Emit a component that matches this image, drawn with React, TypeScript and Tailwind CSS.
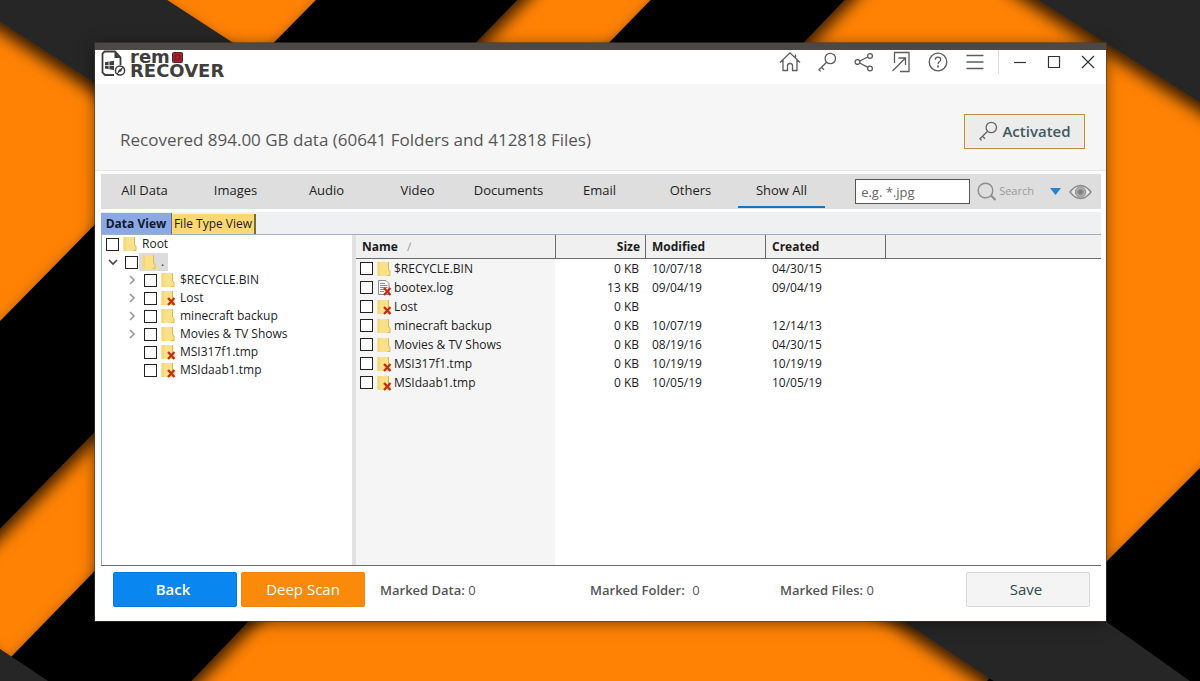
import { useState } from 'react';
import type { ReactNode } from 'react';

type FileKind = 'folder' | 'folder-deleted' | 'file-deleted';

const tabs = ['All Data', 'Images', 'Audio', 'Video', 'Documents', 'Email', 'Others', 'Show All'];

const tree: { name: string; kind: FileKind; expandable: boolean }[] = [
  { name: '$RECYCLE.BIN', kind: 'folder', expandable: true },
  { name: 'Lost', kind: 'folder-deleted', expandable: true },
  { name: 'minecraft backup', kind: 'folder', expandable: true },
  { name: 'Movies & TV Shows', kind: 'folder', expandable: true },
  { name: 'MSI317f1.tmp', kind: 'folder-deleted', expandable: false },
  { name: 'MSIdaab1.tmp', kind: 'folder-deleted', expandable: false },
];

const files: { name: string; kind: FileKind; size: string; modified: string; created: string }[] = [
  { name: '$RECYCLE.BIN', kind: 'folder', size: '0 KB', modified: '10/07/18', created: '04/30/15' },
  { name: 'bootex.log', kind: 'file-deleted', size: '13 KB', modified: '09/04/19', created: '09/04/19' },
  { name: 'Lost', kind: 'folder-deleted', size: '0 KB', modified: '', created: '' },
  { name: 'minecraft backup', kind: 'folder', size: '0 KB', modified: '10/07/19', created: '12/14/13' },
  { name: 'Movies & TV Shows', kind: 'folder', size: '0 KB', modified: '08/19/16', created: '04/30/15' },
  { name: 'MSI317f1.tmp', kind: 'folder-deleted', size: '0 KB', modified: '10/19/19', created: '10/19/19' },
  { name: 'MSIdaab1.tmp', kind: 'folder-deleted', size: '0 KB', modified: '10/05/19', created: '10/05/19' },
];

const Wallpaper = () => (
  <svg
    className="absolute inset-0 w-full h-full"
    viewBox="0 0 1200 681"
    preserveAspectRatio="xMidYMid slice"
    aria-hidden="true"
  >
    <defs>
      <filter id="band" x="-20%" y="-20%" width="140%" height="140%">
        <feDropShadow dx="0" dy="10" stdDeviation="8" floodColor="#000" floodOpacity="0.8" />
      </filter>
    </defs>
    <rect width="1200" height="681" fill="#ff8204" />
    <g fill="#000" filter="url(#band)">
      <path d="M-60 382 L375 -60 L576 -60 L-60 590 Z" />
      <path d="M-60 730 L709 -60 L902 -60 L130 745 Z" />
      <path d="M1106 562 L1260 408 L1260 625 L1010 860 L960 708 Z" />
    </g>
    <g fill="#282526" filter="url(#band)">
      <path d="M-60 -17 L-60 -60 L75 -60 L330 106 L330 235 Z" />
      <path d="M943 -60 L1260 -60 L1260 140 Z" />
      <path d="M800 553 L1010 553 L1270 738 L1080 738 Z" />
      <path d="M-60 609 L120 729 L-60 729 Z" />
    </g>
  </svg>
);

const Logo = () => (
  <div className="flex items-start gap-1 text-[#3f3d3e]">
    <svg width="25" height="27" viewBox="0 0 25 27" fill="none" aria-hidden="true">
      <path d="M13 25 H4 L1.5 22.5 V3.5 L3.5 1.5 H14 L19.5 7.5 V15" stroke="currentColor" strokeWidth="1.8" />
      <path d="M13.5 1.5 V8 H20 Z" fill="currentColor" />
      <path
        d="M4 12.2 L7.6 11.6 V15 H4 Z M8.4 11.4 L13 10.7 V15 H8.4 Z M4 15.8 H7.6 V19.2 L4 18.6 Z M8.4 15.8 H13 V20 L8.4 19.3 Z"
        fill="currentColor"
      />
      <circle cx="19" cy="20.5" r="4.6" fill="#fff" stroke="currentColor" strokeWidth="1.5" />
      <path d="M16.5 22.5 L18 19.5 L21.8 18 L20.2 21.5 Z" fill="currentColor" />
      <path d="M16 24 L22 17" stroke="currentColor" />
    </svg>
    <p className="font-['DejaVu_Sans',sans-serif] font-bold text-lg leading-[14px]">
      rem
      <svg className="inline-block align-baseline ml-[2px]" width="11" height="11" viewBox="0 0 11 11" aria-hidden="true">
        <rect x="0.5" y="0.5" width="10" height="10" rx="1" fill="#a3202c" stroke="#4a2c30" />
        <path d="M3 3h5v5H3z" fill="none" stroke="#7d1a24" />
      </svg>
      <br />
      RECOVER
    </p>
  </div>
);

const KeyIcon = () => (
  <svg width="20" height="20" viewBox="0 0 20 20" fill="none" stroke="currentColor" strokeWidth="1.3" aria-hidden="true">
    <circle cx="13.3" cy="6.5" r="5.2" />
    <path d="M9.6 10.2 L1.5 18.3 M4.5 15.3 L7 17.8 M2 17.8 L3.6 19.4" />
  </svg>
);

const actions: { label: string; icon: ReactNode }[] = [
  {
    label: 'Home',
    icon: (
      <svg width="22" height="22" viewBox="0 0 22 22" fill="none" stroke="currentColor" strokeWidth="1.3">
        <path d="M1 11.5 L11 1.8 L21 11.5 M4 9 V19.5 H8.5 V14.5 Q8.5 12.5 11 12.5 Q13.5 12.5 13.5 14.5 V19.5 H18 V9 M16.5 7 V3.5" />
      </svg>
    ),
  },
  { label: 'License', icon: <KeyIcon /> },
  {
    label: 'Share',
    icon: (
      <svg width="20" height="20" viewBox="0 0 20 20" fill="none" stroke="currentColor" strokeWidth="1.3">
        <circle cx="3.5" cy="10" r="2.4" />
        <circle cx="16" cy="4" r="2.4" />
        <circle cx="16" cy="16.5" r="2.4" />
        <path d="M5.7 9 L13.8 5 M5.7 11 L13.8 15.4" />
      </svg>
    ),
  },
  {
    label: 'Export',
    icon: (
      <svg width="20" height="22" viewBox="0 0 20 22" fill="none" stroke="currentColor" strokeWidth="1.3">
        <path d="M3.5 12 V1.5 H18 V20.5 H9 M1.5 20 L14 7.5 M7.5 7 H14.5 V14" />
      </svg>
    ),
  },
  {
    label: 'Help',
    icon: (
      <svg width="20" height="20" viewBox="0 0 20 20" fill="none" stroke="currentColor" strokeWidth="1.3">
        <circle cx="10" cy="10" r="8.8" />
        <path d="M7.3 7.8 Q7.3 5.2 10 5.2 Q12.7 5.2 12.7 7.6 Q12.7 9 11.2 9.8 Q10 10.5 10 12.2" />
        <path d="M10 13.6 V15.4" strokeWidth="1.7" />
      </svg>
    ),
  },
  {
    label: 'Menu',
    icon: (
      <svg width="20" height="16" viewBox="0 0 20 16" stroke="currentColor" strokeWidth="1.3">
        <path d="M1.5 1.5 H18.5 M1.5 8 H18.5 M1.5 14.5 H18.5" />
      </svg>
    ),
  },
];

const windowControls: { label: string; path: string }[] = [
  { label: 'Minimize', path: 'M1 7.5 H13' },
  { label: 'Maximize', path: 'M1.5 1.5 H12.5 V12.5 H1.5 Z' },
  { label: 'Close', path: 'M1 1 L13 13 M13 1 L1 13' },
];

const ItemIcon = ({ kind }: { kind: FileKind }) => (
  <svg className="shrink-0" width="15" height="16" viewBox="0 0 15 16" fill="none" aria-hidden="true">
    {kind === 'file-deleted' ? (
      <>
        <path d="M1.5 0.5 H9 L12 3.5 V14.5 H1.5 Z" fill="#fafafa" stroke="#8c8c8c" />
        <path d="M3 3.5 H8 M3 5.5 H10.5 M3 7.5 H10.5 M3 9.5 H8 M3 11.5 H7" stroke="#8d8d98" />
      </>
    ) : (
      <>
        <path d="M0.5 1 H11.5 V9 L13 10 V15 H0.5 Z" fill="#fbe08a" />
        <path d="M0.5 1 H3 V15 H0.5 Z" fill="#f5d877" />
        <path d="M11.5 1 V9 L13 10 V14.5 H10.5" stroke="#dfb950" />
      </>
    )}
    {kind !== 'folder' && <path d="M7 8 L13.5 15 M13.5 8 L7 15" stroke="#c32a17" strokeWidth="2.2" />}
  </svg>
);

const Check = ({ label }: { label: string }) => (
  <input
    type="checkbox"
    aria-label={label}
    className="appearance-none block shrink-0 w-[13px] h-[13px] border border-[#222] bg-white checked:bg-[#0a84ee]"
  />
);

const Chevron = ({ open = false }: { open?: boolean }) => (
  <button aria-label={open ? 'Collapse' : 'Expand'} className="w-[13px] h-[13px] flex items-center justify-center">
    <svg width="10" height="10" viewBox="0 0 10 10" fill="none" strokeWidth="1.6">
      {open ? <path d="M1 3 L5 7 L9 3" stroke="#444" /> : <path d="M3 1 L7 5 L3 9" stroke="#999" />}
    </svg>
  </button>
);

const App = () => {
  const [activeTab, setActiveTab] = useState('Show All');
  const [pattern, setPattern] = useState('');

  return (
    <div className="relative h-screen min-h-[500px] flex pt-[43px] pb-[60px] pl-[95px] pr-[94px] overflow-hidden font-['Open_Sans',sans-serif] text-xs text-[#1c1c1c]">
      <Wallpaper />

      <main className="relative flex-1 min-w-0 flex flex-col bg-white border-t-[7px] border-[#4b4846] shadow-[0_0_0_1px_rgba(70,60,50,0.6),0_2px_14px_rgba(0,0,0,0.5)]">
        <header className="flex justify-between h-[34px] pl-[6px] pr-px text-[#5c5c5c]">
          <Logo />
          <div className="flex items-center h-6">
            {actions.map((action) => (
              <button key={action.label} aria-label={action.label} className="w-[37px] flex justify-center">
                {action.icon}
              </button>
            ))}
            <div className="w-px h-6 ml-[5px] mr-1 bg-[#dcdcdc]" />
            {windowControls.map((control) => (
              <button key={control.label} aria-label={control.label} className="w-[34px] flex justify-center">
                <svg width="14" height="14" viewBox="0 0 14 14" fill="none" stroke="#333" strokeWidth="1.2">
                  <path d={control.path} />
                </svg>
              </button>
            ))}
          </div>
        </header>

        <section className="flex justify-between items-start h-[87px] pt-[30px] pl-[25px] pr-[21px] bg-[#f6f6f6] border-b border-[#e6e6e6]">
          <h1 className="mt-3 text-[17px] leading-7 text-[#565656]">
            Recovered 894.00 GB data (60641 Folders and 412818 Files)
          </h1>
          <button className="flex items-center justify-center gap-1 w-[121px] h-[35px] pb-[2px] border border-[#b98f45] bg-[#ececec] shadow-[inset_0_0_0_1px_#fbefd8] text-[15px] font-semibold text-[#3f5a5a]">
            <span className="text-[#666]">
              <KeyIcon />
            </span>
            Activated
          </button>
        </section>

        <div className="flex-1 min-h-0 flex flex-col pt-[3px] pl-[6px] pr-[5px]">
          <div className="flex items-center h-[35px] pr-[9px] bg-[#dedede]">
            <nav className="flex self-stretch gap-1">
              {tabs.map((tab) => (
                <button
                  key={tab}
                  onClick={() => setActiveTab(tab)}
                  className={`w-[87px] h-[34px] pt-px text-[13px] text-[#222] border-b-2 ${
                    activeTab === tab ? 'border-[#1f72b4]' : 'border-transparent'
                  }`}
                >
                  {tab}
                </button>
              ))}
            </nav>
            <input
              type="text"
              aria-label="Search pattern"
              placeholder="e.g. *.jpg"
              value={pattern}
              onChange={(e) => setPattern(e.target.value)}
              className="ml-auto w-[115px] h-[25px] px-[5px] border border-[#555] bg-white text-[13px] placeholder:text-[#666]"
            />
            <button className="flex items-center gap-[2px] ml-[7px] text-[11px] text-[#9a9a9a]">
              <svg width="20" height="20" viewBox="0 0 20 20" fill="none" stroke="#8e8e8e" strokeWidth="1.4">
                <circle cx="8.5" cy="8.5" r="7.3" />
                <path d="M14 13.5 L18.5 18" strokeWidth="2.2" />
              </svg>
              Search
            </button>
            <button aria-label="Search options" className="ml-4">
              <svg width="11" height="7" viewBox="0 0 11 7" fill="#1e86d4">
                <path d="M0 0 H11 L5.5 7 Z" />
              </svg>
            </button>
            <button aria-label="Preview" className="ml-2">
              <svg width="23" height="16" viewBox="0 0 23 16" fill="none" stroke="#8c8c8c">
                <path d="M1 8 Q6 1.5 11.5 1.5 Q17 1.5 22 8 Q17 14.5 11.5 14.5 Q6 14.5 1 8 Z" fill="#ececec" strokeWidth="1.5" />
                <circle cx="11.5" cy="8" r="5.2" fill="#b5b5b5" />
                <circle cx="11.5" cy="8" r="2.8" fill="#858585" />
              </svg>
            </button>
          </div>

          <div className="flex items-end h-[23px] mt-[3px] bg-[#eff0f1] border-b border-[#9db0c8]">
            <button className="w-[71px] h-[21px] bg-[#8ba8e4] border-r border-[#5b6f9c] font-bold text-[#10182e]">
              Data View
            </button>
            <button className="w-[84px] h-5 bg-[#fcd873] border-r-2 border-[#7d6a35]">File Type View</button>
          </div>

          <div className="flex-1 min-h-0 flex border-b border-[#6b6b6b]">
            <ul className="w-[251px] shrink-0 border-l border-[#8fabd6] pl-1 overflow-hidden">
              <li className="flex items-center h-[18px]">
                <Check label="Root" />
                <div className="flex items-center gap-1 pl-1">
                  <ItemIcon kind="folder" />
                  Root
                </div>
              </li>
              <li className="flex items-center gap-[6px] h-[18px]">
                <Chevron open />
                <div className="flex items-center">
                  <Check label="Drive" />
                  <div className="flex items-center gap-1 w-[29px] h-[18px] pl-[3px] ml-px bg-[#dcdcdc]">
                    <ItemIcon kind="folder" />.
                  </div>
                </div>
              </li>
              {tree.map((item) => (
                <li key={item.name} className="flex items-center gap-[6px] h-[18px] pl-[19px]">
                  {item.expandable ? <Chevron /> : <span className="w-[13px]" />}
                  <div className="flex items-center">
                    <Check label={item.name} />
                    <div className="flex items-center gap-1 pl-1">
                      <ItemIcon kind={item.kind} />
                      {item.name}
                    </div>
                  </div>
                </li>
              ))}
            </ul>

            <div className="w-1 shrink-0 bg-[#dfe1e3]" />

            <div className="flex-1 min-w-0 bg-[linear-gradient(to_right,#f5f5f5_199px,white_199px)]">
              <table className="w-full table-fixed border-separate border-spacing-0">
                <thead>
                  <tr className="h-6 bg-[#f0f0f0] text-left">
                    <th className="w-[200px] pl-[6px] border-r border-b border-[#6b6b6b]">
                      Name <span className="pl-[6px] font-normal text-[#999]">∕</span>
                    </th>
                    <th className="w-[90px] pr-[5px] text-right border-r border-b border-[#6b6b6b]">Size</th>
                    <th className="w-[120px] pl-[6px] border-r border-b border-[#6b6b6b]">Modified</th>
                    <th className="w-[120px] pl-[6px] border-r border-b border-[#6b6b6b]">Created</th>
                    <th aria-label="Empty" className="border-b border-[#6b6b6b]" />
                  </tr>
                </thead>
                <tbody>
                  {files.map((file) => (
                    <tr key={file.name} className="h-[19px]">
                      <td className="p-0">
                        <div className="flex items-center h-[19px] pl-1">
                          <Check label={file.name} />
                          <div className="flex items-center gap-[2px] pl-1">
                            <ItemIcon kind={file.kind} />
                            {file.name}
                          </div>
                        </div>
                      </td>
                      <td className="pr-[7px] text-right">{file.size}</td>
                      <td className="pl-[6px]">{file.modified}</td>
                      <td className="pl-[6px]">{file.created}</td>
                      <td />
                    </tr>
                  ))}
                </tbody>
              </table>
            </div>
          </div>
        </div>

        <footer className="flex items-start h-[55px] pt-[6px] pl-[18px] pr-4 text-[13px] font-semibold text-[#555]">
          <button className="w-[124px] h-[35px] pr-1 pb-[2px] rounded-xs bg-[#0a86f0] border border-[#0878d8] text-[15px] text-white">
            Back
          </button>
          <button className="w-[124px] h-[35px] ml-1 pb-[2px] rounded-xs bg-[#fb8a0a] border border-[#e98510] text-[15px] font-normal text-white">
            Deep Scan
          </button>
          <div className="flex h-[38px] items-center pl-[15px]">
            <p className="w-[210px]">
              Marked Data: <span className="font-normal">0</span>
            </p>
            <p className="w-[190px]">
              Marked Folder: <span className="pl-1 font-normal">0</span>
            </p>
            <p>
              Marked Files: <span className="font-normal">0</span>
            </p>
          </div>
          <button className="w-[124px] h-[35px] ml-auto pr-1 pb-[2px] rounded-xs bg-[#f4f4f4] border border-[#d8d8d8] text-[15px] font-normal text-[#2f4a4a]">
            Save
          </button>
        </footer>
      </main>
    </div>
  );
};

export default App;
